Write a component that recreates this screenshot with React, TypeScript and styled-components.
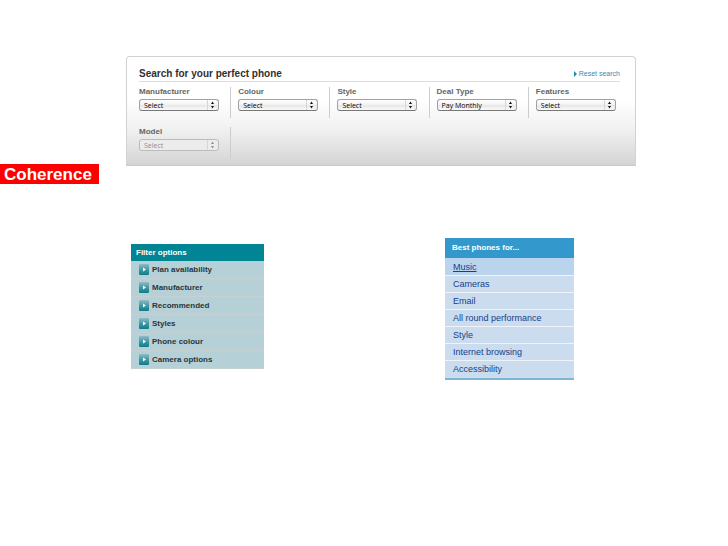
import React, { useId } from "react";
import styled, { createGlobalStyle } from "styled-components";

const GlobalStyle = createGlobalStyle`
  *, *::before, *::after { box-sizing: border-box; }
  body { margin: 0; background: #fff; font-family: "Liberation Sans", Arial, sans-serif; }
`;

const Page = styled.main`
  padding: 56px 0;
`;

const Top = styled.section`
  display: grid;
  grid-template-columns: 99px minmax(0, 1fr);
  column-gap: 27px;
  padding-right: 92px;
`;

const Tag = styled.h1`
  align-self: end;
  margin: 108px 0 0;
  padding: 1px 0 0 4px;
  background: #fe0000;
  color: #fff;
  font-size: 17px;
  line-height: 19px;
`;

const SearchPanel = styled.form`
  align-self: start;
  padding: 9px 0 7px 12px;
  border: 1px solid #d2d2d2;
  border-bottom-color: #c8c8c8;
  border-radius: 4px 4px 0 0;
  background: linear-gradient(#fff 40%, #f0f0f0 68%, #d4d4d4);
`;

const PanelHeader = styled.header`
  display: flex;
  justify-content: space-between;
  align-items: center;
  margin-right: 15px;
  height: 16px;
  border-bottom: 1px solid #dcdcdc;
`;

const PanelTitle = styled.h2`
  margin: 0;
  color: #303030;
  font-size: 10px;
  line-height: 14px;
`;

const Reset = styled.a`
  display: flex;
  align-items: center;
  gap: 2px;
  color: #2f8db8;
  font-size: 7px;
  line-height: 12px;
  text-decoration: none;
`;

const Fields = styled.div`
  display: grid;
  grid-template-columns: repeat(5, minmax(0, 1fr));
  row-gap: 9px;
  padding-top: 5px;
`;

const Field = styled.div<{ $divided: boolean }>`
  height: 31px;
  padding-right: 8px;
  border-right: 1px solid ${(p) => (p.$divided ? "#cdcdcd" : "transparent")};
  margin-right: 7px;
`;

const FieldLabel = styled.label`
  display: block;
  color: #666;
  font-size: 8px;
  font-weight: bold;
  line-height: 10px;
  padding-bottom: 2px;
`;

const SelectBox = styled.div`
  position: relative;
  width: 80px;
  height: 12px;
`;

const Select = styled.select`
  display: block;
  appearance: none;
  width: 100%;
  height: 12px;
  margin: 0;
  padding: 1px 14px 0 4px;
  border: 1px solid #a2a2a2;
  border-bottom-color: #777;
  border-radius: 3px;
  background: linear-gradient(#fff, #f1f1f1 50%, #e6e6e6 51%, #fafafa);
  color: #000;
  font-family: "Open Sans", "Noto Sans", sans-serif;
  font-size: 7px;
  line-height: 9px;

  &:disabled {
    border-color: #bbb;
    background: #ececec;
    color: #8c8c8c;
    opacity: 1;
  }
`;

const Arrows = styled.svg<{ $muted: boolean }>`
  position: absolute;
  top: 1px;
  right: 1px;
  pointer-events: none;
  color: ${(p) => (p.$muted ? "#8f8f8f" : "#111")};
`;

const Menus = styled.section`
  display: grid;
  grid-template-columns: 133px 129px;
  column-gap: 181px;
  align-items: start;
  padding: 54px 0 0 131px;
`;

const FilterCard = styled.nav`
  margin-top: 6px;
  background: #b5d1d7;
`;

const FilterTitle = styled.h2`
  margin: 0;
  padding-left: 5px;
  background: #018493;
  color: #fff;
  font-size: 8px;
  line-height: 17px;
`;

const List = styled.ul`
  margin: 0;
  padding: 0;
  list-style: none;
`;

const FilterItem = styled.li`
  height: 18px;
  border-bottom: 1px solid #c6cfd2;
`;

const FilterButton = styled.button`
  display: flex;
  align-items: center;
  gap: 3px;
  width: 100%;
  height: 17px;
  padding: 0 0 0 8px;
  border: 0;
  background: none;
  color: #2b3538;
  font: bold 8px/17px "Liberation Sans", Arial, sans-serif;
  text-align: left;
`;

const BestCard = styled.nav`
  background: #cadcee;
  border-bottom: 2px solid #7fb6d8;
`;

const BestTitle = styled.h2`
  margin: 0;
  padding-left: 7px;
  background: #3399cc;
  color: #fff;
  font-size: 8px;
  line-height: 20px;
`;

const BestLink = styled.a<{ $current: boolean }>`
  display: block;
  padding-left: 8px;
  background: ${(p) => (p.$current ? "#bbd4ed" : "#cadcee")};
  color: #163f8c;
  font-size: 9px;
  line-height: 16px;
  text-decoration: ${(p) => (p.$current ? "underline" : "none")};
`;

const BestItem = styled.li`
  border-bottom: 1px solid #eef4fa;

  &:first-child ${BestLink} {
    padding-top: 1px;
  }

  &:last-child {
    border-bottom: 0;
  }
`;

const BestList = styled(List)`
  padding-bottom: 1px;
`;

function SelectField({ label, value, divided = true, disabled = false }: {
  label: string;
  value: string;
  divided?: boolean;
  disabled?: boolean;
}) {
  const id = useId();
  return (
    <Field $divided={divided}>
      <FieldLabel htmlFor={id}>{label}</FieldLabel>
      <SelectBox>
        <Select id={id} disabled={disabled} defaultValue={value}>
          <option>{value}</option>
        </Select>
        <Arrows $muted={disabled} width="11" height="10" viewBox="0 0 11 10" aria-hidden="true">
          <path d="M0.5 0V10" stroke="#d6d6d6" />
          <path d="M4 4L5.5 1.5L7 4ZM4 6L5.5 8.5L7 6Z" fill="currentColor" />
        </Arrows>
      </SelectBox>
    </Field>
  );
}

function FilterIcon() {
  return (
    <svg width="10" height="11" viewBox="0 0 10 11" aria-hidden="true">
      <defs>
        <linearGradient id="filter-icon" x2="0" y2="1">
          <stop offset="0" stopColor="#8fbcc6" />
          <stop offset="0.45" stopColor="#4a9ba8" />
          <stop offset="1" stopColor="#0b7c8b" />
        </linearGradient>
      </defs>
      <rect width="10" height="11" rx="1" fill="url(#filter-icon)" />
      <path d="M4 3.5L7 5.5L4 7.5Z" fill="#fff" />
    </svg>
  );
}

const filters = ["Plan availability", "Manufacturer", "Recommended", "Styles", "Phone colour", "Camera options"];
const best = ["Music", "Cameras", "Email", "All round performance", "Style", "Internet browsing", "Accessibility"];

export default function App() {
  return (
    <>
      <GlobalStyle />
      <Page>
        <Top>
          <Tag>Coherence</Tag>
          <SearchPanel>
            <PanelHeader>
              <PanelTitle>Search for your perfect phone</PanelTitle>
              <Reset href="#reset">
                <svg width="3" height="6" viewBox="0 0 3 6" aria-hidden="true">
                  <path d="M0 0L3 3L0 6Z" fill="#2689b0" />
                </svg>
                Reset search
              </Reset>
            </PanelHeader>
            <Fields>
              <SelectField label="Manufacturer" value="Select" />
              <SelectField label="Colour" value="Select" />
              <SelectField label="Style" value="Select" />
              <SelectField label="Deal Type" value="Pay Monthly" />
              <SelectField label="Features" value="Select" divided={false} />
              <SelectField label="Model" value="Select" disabled />
            </Fields>
          </SearchPanel>
        </Top>
        <Menus>
          <FilterCard aria-label="Filter options">
            <FilterTitle>Filter options</FilterTitle>
            <List>
              {filters.map((name) => (
                <FilterItem key={name}>
                  <FilterButton type="button">
                    <FilterIcon />
                    {name}
                  </FilterButton>
                </FilterItem>
              ))}
            </List>
          </FilterCard>
          <BestCard aria-label="Best phones for">
            <BestTitle>Best phones for...</BestTitle>
            <BestList>
              {best.map((name) => (
                <BestItem key={name}>
                  <BestLink href="#phones" $current={name === "Music"}>{name}</BestLink>
                </BestItem>
              ))}
            </BestList>
          </BestCard>
        </Menus>
      </Page>
    </>
  );
}
